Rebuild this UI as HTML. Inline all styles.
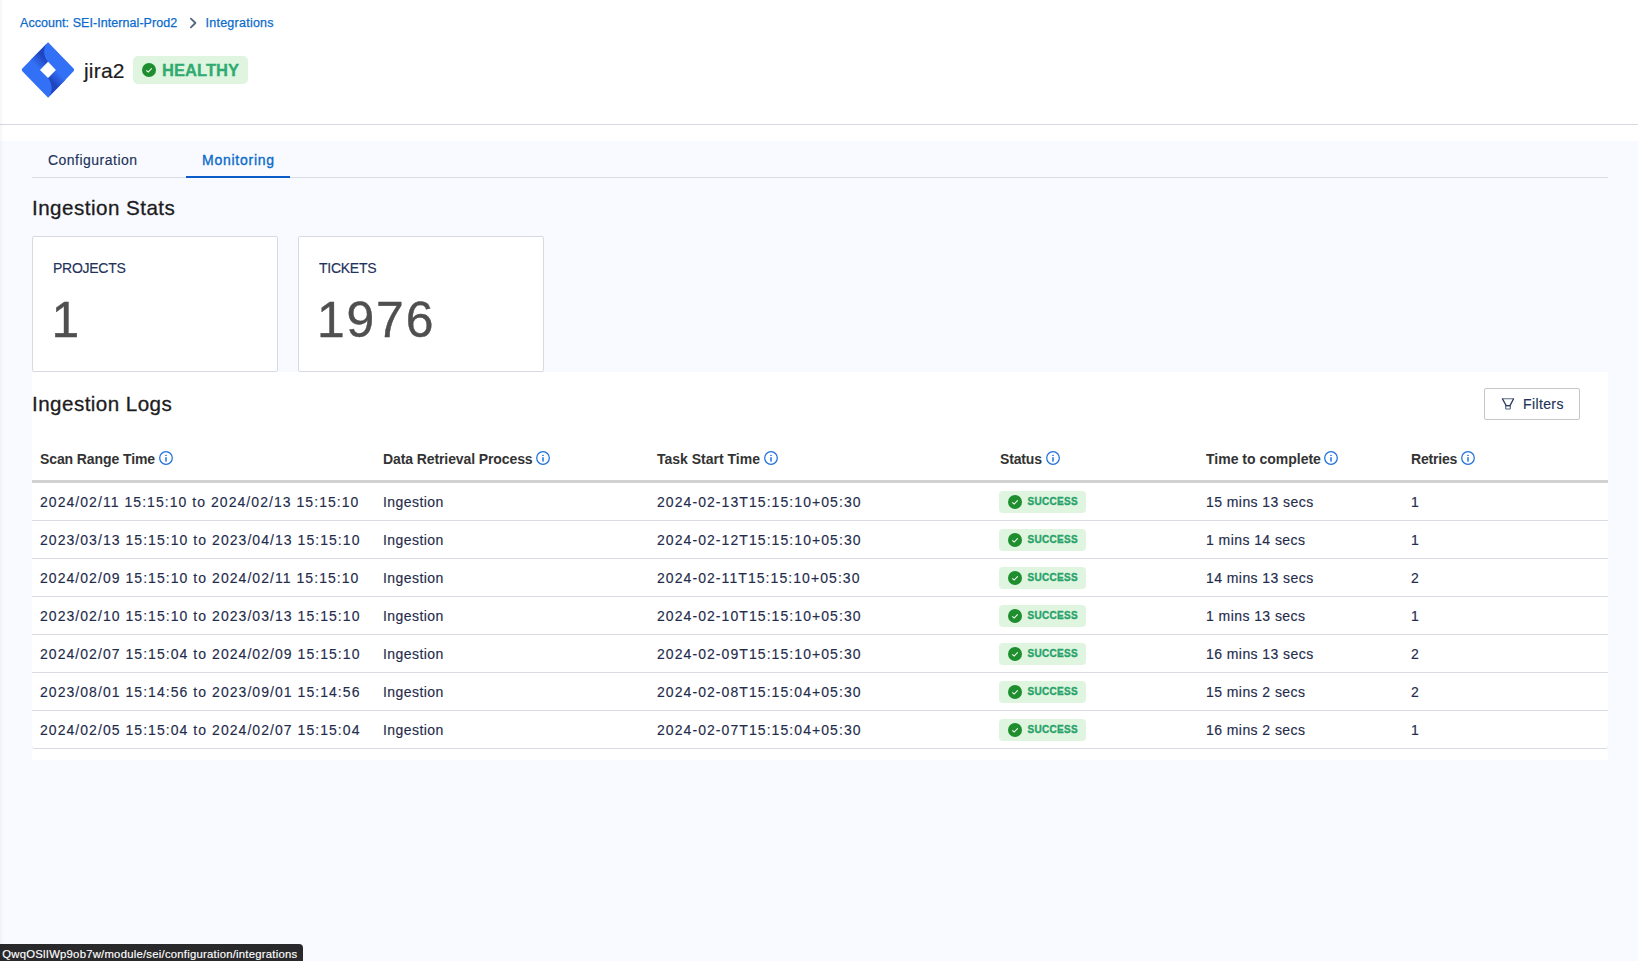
<!DOCTYPE html>
<html><head><meta charset="utf-8"><title>jira2 - Monitoring</title>
<style>
*{box-sizing:border-box;margin:0;padding:0}
html,body{width:1638px;height:961px;overflow:hidden;background:#f9faff;font-family:"Liberation Sans",sans-serif;position:relative}
.t{position:absolute;white-space:nowrap;line-height:1.15}
.r{position:absolute}
.th{font-size:14px;font-weight:bold;color:#333}
</style></head><body>
<div class="r" style="left:0px;top:0px;width:1638px;height:141px;background:#fff;"></div>
<div class="r" style="left:0px;top:0px;width:4px;height:961px;background:linear-gradient(to right,rgba(0,0,40,0.035),rgba(0,0,40,0));z-index:5"></div>
<div class="r" style="left:0px;top:124px;width:1638px;height:1px;background:#d9d9e6;"></div>
<div class="t" style="left:20px;top:16px;font-size:12.5px;color:#0b6bcb;font-weight:normal;letter-spacing:0.06px;-webkit-text-stroke:0.25px #0b6bcb">Account: SEI-Internal-Prod2</div>
<svg class="r" style="left:189px;top:17px" width="9" height="12" viewBox="0 0 9 12"><path d="M1.9 1.7 L6.4 6 L1.9 10.3" fill="none" stroke="#526579" stroke-width="1.8" stroke-linecap="round" stroke-linejoin="round"/></svg>
<div class="t" style="left:205.5px;top:16px;font-size:12.5px;color:#0b6bcb;font-weight:normal;letter-spacing:0.25px;-webkit-text-stroke:0.25px #0b6bcb">Integrations</div>
<svg class="r" style="left:20px;top:40px" width="56" height="60" viewBox="0 0 897 961" preserveAspectRatio="none">
<defs>
<linearGradient id="g1" gradientUnits="userSpaceOnUse" x1="320" y1="480" x2="450" y2="350"><stop offset="0" stop-color="#3271f5"/><stop offset="1" stop-color="#1f45c0"/></linearGradient>
<linearGradient id="g2" gradientUnits="userSpaceOnUse" x1="575" y1="480" x2="445" y2="610"><stop offset="0" stop-color="#3271f5"/><stop offset="1" stop-color="#1f45c0"/></linearGradient>
</defs>
<path d="M450 35 L858 458 Q880 480 858 502 L450 925 L37 502 Q15 480 37 458 Z" fill="#3271f5"/>
<path d="M450 35 L165 325 L320 480 L450 350 C375 270 360 110 450 35 Z" fill="url(#g1)"/>
<path d="M445 925 L730 635 L575 480 L445 610 C520 690 535 850 445 925 Z" fill="url(#g2)"/>
<path d="M450 350 L575 480 L450 610 L320 480 Z" fill="#fff"/>
</svg>
<div class="t" style="left:84px;top:59px;font-size:21px;color:#1c1c1e;font-weight:normal;letter-spacing:0.2px;-webkit-text-stroke:0.2px #1c1c1e">jira2</div>
<div class="r" style="left:133px;top:56px;width:115px;height:28px;background:#dff5e0;border-radius:5px"></div>
<svg class="r" style="left:142px;top:63px" width="14" height="14" viewBox="0 0 14 14"><circle cx="7" cy="7" r="7" fill="#1e8e2e"/><path d="M4.3 7.3 L6.2 9.1 L9.7 5.3" fill="none" stroke="#fff" stroke-width="1.05"/></svg>
<div class="t" style="left:162px;top:61px;font-size:16.5px;color:#2fab72;font-weight:bold;letter-spacing:0.05px;-webkit-text-stroke:0.3px #2fab72">HEALTHY</div>
<div class="t" style="left:48px;top:152px;font-size:14px;color:#22325a;font-weight:normal;letter-spacing:0.48px;-webkit-text-stroke:0.15px #22325a">Configuration</div>
<div class="t" style="left:202px;top:152px;font-size:14px;color:#0b6bcb;font-weight:normal;letter-spacing:0.75px;-webkit-text-stroke:0.35px #0b6bcb">Monitoring</div>
<div class="r" style="left:32px;top:177px;width:1576px;height:1px;background:#d9dce3;"></div>
<div class="r" style="left:186px;top:176px;width:104px;height:2px;background:#0a5cca;"></div>
<div class="t" style="left:32px;top:196.2px;font-size:20.6px;color:#1c1c1e;font-weight:normal;letter-spacing:0.47px;-webkit-text-stroke:0.3px #1c1c1e">Ingestion Stats</div>
<div class="r" style="left:32px;top:236px;width:246px;height:136px;background:#fff;border:1px solid #d8dae2;border-radius:2px"></div>
<div class="r" style="left:298px;top:236px;width:246px;height:136px;background:#fff;border:1px solid #d8dae2;border-radius:2px"></div>
<div class="t" style="left:53px;top:259.5px;font-size:14px;color:#22325a;font-weight:normal;letter-spacing:-0.27px;-webkit-text-stroke:0.15px #22325a">PROJECTS</div>
<div class="t" style="left:51.5px;top:291.5px;font-size:49.8px;color:#4f4f4f;font-weight:normal;letter-spacing:0px;-webkit-text-stroke:0.4px #4f4f4f">1</div>
<div class="t" style="left:319px;top:259.5px;font-size:14px;color:#22325a;font-weight:normal;letter-spacing:-0.27px;-webkit-text-stroke:0.15px #22325a">TICKETS</div>
<div class="t" style="left:317px;top:291.5px;font-size:49.8px;color:#4f4f4f;font-weight:normal;letter-spacing:1.85px;-webkit-text-stroke:0.4px #4f4f4f">1976</div>
<div class="r" style="left:32px;top:372px;width:1576px;height:388px;background:#fff;"></div>
<div class="t" style="left:32px;top:392.2px;font-size:20.6px;color:#1c1c1e;font-weight:normal;letter-spacing:0.45px;-webkit-text-stroke:0.3px #1c1c1e">Ingestion Logs</div>
<div class="r" style="left:1484px;top:388px;width:96px;height:32px;background:#fff;border:1px solid #c9c6cb;border-radius:2px"></div>
<svg class="r" style="left:1496px;top:392px" width="24" height="24" viewBox="0 0 24 24"><g fill="none" stroke="#2b3a5f" stroke-linecap="round" stroke-linejoin="round"><path d="M6.3 6.8 H17.6" stroke-width="1.1" stroke-opacity="0.75"/><path d="M6.6 7.1 L10.2 13.6 H14 L17.4 7.1" stroke-width="1.25"/><rect x="9.7" y="13.6" width="4.6" height="3.4" rx="0.5" stroke-width="1.1" stroke-opacity="0.8"/></g></svg>
<div class="t" style="left:1523px;top:396px;font-size:14px;color:#22325a;font-weight:normal;letter-spacing:0.38px;-webkit-text-stroke:0.15px #22325a">Filters</div>
<div class="t th" style="left:40px;top:451px;letter-spacing:-0.1px">Scan Range Time</div>
<svg class="r" style="left:159px;top:451px" width="14" height="14" viewBox="0 0 14 14"><circle cx="7" cy="7" r="6.3" fill="none" stroke="#1f70dc" stroke-width="1.25"/><rect x="6.15" y="6.2" width="1.7" height="4.4" fill="#3a86e6"/><rect x="6.15" y="3.8" width="1.7" height="1.3" rx="0.4" fill="#2f7ae0"/></svg>
<div class="t th" style="left:383px;top:451px;letter-spacing:-0.1px">Data Retrieval Process</div>
<svg class="r" style="left:536px;top:451px" width="14" height="14" viewBox="0 0 14 14"><circle cx="7" cy="7" r="6.3" fill="none" stroke="#1f70dc" stroke-width="1.25"/><rect x="6.15" y="6.2" width="1.7" height="4.4" fill="#3a86e6"/><rect x="6.15" y="3.8" width="1.7" height="1.3" rx="0.4" fill="#2f7ae0"/></svg>
<div class="t th" style="left:657px;top:451px;letter-spacing:0px">Task Start Time</div>
<svg class="r" style="left:764px;top:451px" width="14" height="14" viewBox="0 0 14 14"><circle cx="7" cy="7" r="6.3" fill="none" stroke="#1f70dc" stroke-width="1.25"/><rect x="6.15" y="6.2" width="1.7" height="4.4" fill="#3a86e6"/><rect x="6.15" y="3.8" width="1.7" height="1.3" rx="0.4" fill="#2f7ae0"/></svg>
<div class="t th" style="left:1000px;top:451px;letter-spacing:-0.15px">Status</div>
<svg class="r" style="left:1046px;top:451px" width="14" height="14" viewBox="0 0 14 14"><circle cx="7" cy="7" r="6.3" fill="none" stroke="#1f70dc" stroke-width="1.25"/><rect x="6.15" y="6.2" width="1.7" height="4.4" fill="#3a86e6"/><rect x="6.15" y="3.8" width="1.7" height="1.3" rx="0.4" fill="#2f7ae0"/></svg>
<div class="t th" style="left:1206px;top:451px;letter-spacing:0px">Time to complete</div>
<svg class="r" style="left:1324px;top:451px" width="14" height="14" viewBox="0 0 14 14"><circle cx="7" cy="7" r="6.3" fill="none" stroke="#1f70dc" stroke-width="1.25"/><rect x="6.15" y="6.2" width="1.7" height="4.4" fill="#3a86e6"/><rect x="6.15" y="3.8" width="1.7" height="1.3" rx="0.4" fill="#2f7ae0"/></svg>
<div class="t th" style="left:1411px;top:451px;letter-spacing:-0.2px">Retries</div>
<svg class="r" style="left:1461px;top:451px" width="14" height="14" viewBox="0 0 14 14"><circle cx="7" cy="7" r="6.3" fill="none" stroke="#1f70dc" stroke-width="1.25"/><rect x="6.15" y="6.2" width="1.7" height="4.4" fill="#3a86e6"/><rect x="6.15" y="3.8" width="1.7" height="1.3" rx="0.4" fill="#2f7ae0"/></svg>
<div class="r" style="left:32px;top:480px;width:1576px;height:3px;background:#d2d2d2;"></div>
<div class="t" style="left:40px;top:494px;font-size:14px;color:#1f2c4c;font-weight:normal;letter-spacing:1.05px;-webkit-text-stroke:0.15px #1f2c4c">2024/02/11 15:15:10 to 2024/02/13 15:15:10</div>
<div class="t" style="left:383px;top:494px;font-size:14px;color:#1f2c4c;font-weight:normal;letter-spacing:0.44px;-webkit-text-stroke:0.15px #1f2c4c">Ingestion</div>
<div class="t" style="left:657px;top:494px;font-size:14px;color:#1f2c4c;font-weight:normal;letter-spacing:1.07px;-webkit-text-stroke:0.15px #1f2c4c">2024-02-13T15:15:10+05:30</div>
<div class="r" style="left:999px;top:491px;width:87px;height:22px;background:#dff5e0;border-radius:4px"></div>
<svg class="r" style="left:1008px;top:495px" width="14" height="14" viewBox="0 0 14 14"><circle cx="7" cy="7" r="7" fill="#1e8e2e"/><path d="M4.3 7.3 L6.2 9.1 L9.7 5.3" fill="none" stroke="#fff" stroke-width="1.05"/></svg>
<div class="t" style="left:1027.5px;top:496px;font-size:10px;color:#2aa36a;font-weight:bold;letter-spacing:0.32px;-webkit-text-stroke:0.35px #2aa36a">SUCCESS</div>
<div class="t" style="left:1206px;top:494px;font-size:14px;color:#1f2c4c;font-weight:normal;letter-spacing:0.43px;-webkit-text-stroke:0.15px #1f2c4c">15 mins 13 secs</div>
<div class="t" style="left:1411px;top:494px;font-size:14px;color:#1f2c4c;font-weight:normal;letter-spacing:0px;-webkit-text-stroke:0.15px #1f2c4c">1</div>
<div class="r" style="left:32px;top:520px;width:1576px;height:1px;background:#d9dbe4;"></div>
<div class="t" style="left:40px;top:532px;font-size:14px;color:#1f2c4c;font-weight:normal;letter-spacing:1.05px;-webkit-text-stroke:0.15px #1f2c4c">2023/03/13 15:15:10 to 2023/04/13 15:15:10</div>
<div class="t" style="left:383px;top:532px;font-size:14px;color:#1f2c4c;font-weight:normal;letter-spacing:0.44px;-webkit-text-stroke:0.15px #1f2c4c">Ingestion</div>
<div class="t" style="left:657px;top:532px;font-size:14px;color:#1f2c4c;font-weight:normal;letter-spacing:1.07px;-webkit-text-stroke:0.15px #1f2c4c">2024-02-12T15:15:10+05:30</div>
<div class="r" style="left:999px;top:529px;width:87px;height:22px;background:#dff5e0;border-radius:4px"></div>
<svg class="r" style="left:1008px;top:533px" width="14" height="14" viewBox="0 0 14 14"><circle cx="7" cy="7" r="7" fill="#1e8e2e"/><path d="M4.3 7.3 L6.2 9.1 L9.7 5.3" fill="none" stroke="#fff" stroke-width="1.05"/></svg>
<div class="t" style="left:1027.5px;top:534px;font-size:10px;color:#2aa36a;font-weight:bold;letter-spacing:0.32px;-webkit-text-stroke:0.35px #2aa36a">SUCCESS</div>
<div class="t" style="left:1206px;top:532px;font-size:14px;color:#1f2c4c;font-weight:normal;letter-spacing:0.43px;-webkit-text-stroke:0.15px #1f2c4c">1 mins 14 secs</div>
<div class="t" style="left:1411px;top:532px;font-size:14px;color:#1f2c4c;font-weight:normal;letter-spacing:0px;-webkit-text-stroke:0.15px #1f2c4c">1</div>
<div class="r" style="left:32px;top:558px;width:1576px;height:1px;background:#d9dbe4;"></div>
<div class="t" style="left:40px;top:570px;font-size:14px;color:#1f2c4c;font-weight:normal;letter-spacing:1.05px;-webkit-text-stroke:0.15px #1f2c4c">2024/02/09 15:15:10 to 2024/02/11 15:15:10</div>
<div class="t" style="left:383px;top:570px;font-size:14px;color:#1f2c4c;font-weight:normal;letter-spacing:0.44px;-webkit-text-stroke:0.15px #1f2c4c">Ingestion</div>
<div class="t" style="left:657px;top:570px;font-size:14px;color:#1f2c4c;font-weight:normal;letter-spacing:1.07px;-webkit-text-stroke:0.15px #1f2c4c">2024-02-11T15:15:10+05:30</div>
<div class="r" style="left:999px;top:567px;width:87px;height:22px;background:#dff5e0;border-radius:4px"></div>
<svg class="r" style="left:1008px;top:571px" width="14" height="14" viewBox="0 0 14 14"><circle cx="7" cy="7" r="7" fill="#1e8e2e"/><path d="M4.3 7.3 L6.2 9.1 L9.7 5.3" fill="none" stroke="#fff" stroke-width="1.05"/></svg>
<div class="t" style="left:1027.5px;top:572px;font-size:10px;color:#2aa36a;font-weight:bold;letter-spacing:0.32px;-webkit-text-stroke:0.35px #2aa36a">SUCCESS</div>
<div class="t" style="left:1206px;top:570px;font-size:14px;color:#1f2c4c;font-weight:normal;letter-spacing:0.43px;-webkit-text-stroke:0.15px #1f2c4c">14 mins 13 secs</div>
<div class="t" style="left:1411px;top:570px;font-size:14px;color:#1f2c4c;font-weight:normal;letter-spacing:0px;-webkit-text-stroke:0.15px #1f2c4c">2</div>
<div class="r" style="left:32px;top:596px;width:1576px;height:1px;background:#d9dbe4;"></div>
<div class="t" style="left:40px;top:608px;font-size:14px;color:#1f2c4c;font-weight:normal;letter-spacing:1.05px;-webkit-text-stroke:0.15px #1f2c4c">2023/02/10 15:15:10 to 2023/03/13 15:15:10</div>
<div class="t" style="left:383px;top:608px;font-size:14px;color:#1f2c4c;font-weight:normal;letter-spacing:0.44px;-webkit-text-stroke:0.15px #1f2c4c">Ingestion</div>
<div class="t" style="left:657px;top:608px;font-size:14px;color:#1f2c4c;font-weight:normal;letter-spacing:1.07px;-webkit-text-stroke:0.15px #1f2c4c">2024-02-10T15:15:10+05:30</div>
<div class="r" style="left:999px;top:605px;width:87px;height:22px;background:#dff5e0;border-radius:4px"></div>
<svg class="r" style="left:1008px;top:609px" width="14" height="14" viewBox="0 0 14 14"><circle cx="7" cy="7" r="7" fill="#1e8e2e"/><path d="M4.3 7.3 L6.2 9.1 L9.7 5.3" fill="none" stroke="#fff" stroke-width="1.05"/></svg>
<div class="t" style="left:1027.5px;top:610px;font-size:10px;color:#2aa36a;font-weight:bold;letter-spacing:0.32px;-webkit-text-stroke:0.35px #2aa36a">SUCCESS</div>
<div class="t" style="left:1206px;top:608px;font-size:14px;color:#1f2c4c;font-weight:normal;letter-spacing:0.43px;-webkit-text-stroke:0.15px #1f2c4c">1 mins 13 secs</div>
<div class="t" style="left:1411px;top:608px;font-size:14px;color:#1f2c4c;font-weight:normal;letter-spacing:0px;-webkit-text-stroke:0.15px #1f2c4c">1</div>
<div class="r" style="left:32px;top:634px;width:1576px;height:1px;background:#d9dbe4;"></div>
<div class="t" style="left:40px;top:646px;font-size:14px;color:#1f2c4c;font-weight:normal;letter-spacing:1.05px;-webkit-text-stroke:0.15px #1f2c4c">2024/02/07 15:15:04 to 2024/02/09 15:15:10</div>
<div class="t" style="left:383px;top:646px;font-size:14px;color:#1f2c4c;font-weight:normal;letter-spacing:0.44px;-webkit-text-stroke:0.15px #1f2c4c">Ingestion</div>
<div class="t" style="left:657px;top:646px;font-size:14px;color:#1f2c4c;font-weight:normal;letter-spacing:1.07px;-webkit-text-stroke:0.15px #1f2c4c">2024-02-09T15:15:10+05:30</div>
<div class="r" style="left:999px;top:643px;width:87px;height:22px;background:#dff5e0;border-radius:4px"></div>
<svg class="r" style="left:1008px;top:647px" width="14" height="14" viewBox="0 0 14 14"><circle cx="7" cy="7" r="7" fill="#1e8e2e"/><path d="M4.3 7.3 L6.2 9.1 L9.7 5.3" fill="none" stroke="#fff" stroke-width="1.05"/></svg>
<div class="t" style="left:1027.5px;top:648px;font-size:10px;color:#2aa36a;font-weight:bold;letter-spacing:0.32px;-webkit-text-stroke:0.35px #2aa36a">SUCCESS</div>
<div class="t" style="left:1206px;top:646px;font-size:14px;color:#1f2c4c;font-weight:normal;letter-spacing:0.43px;-webkit-text-stroke:0.15px #1f2c4c">16 mins 13 secs</div>
<div class="t" style="left:1411px;top:646px;font-size:14px;color:#1f2c4c;font-weight:normal;letter-spacing:0px;-webkit-text-stroke:0.15px #1f2c4c">2</div>
<div class="r" style="left:32px;top:672px;width:1576px;height:1px;background:#d9dbe4;"></div>
<div class="t" style="left:40px;top:684px;font-size:14px;color:#1f2c4c;font-weight:normal;letter-spacing:1.05px;-webkit-text-stroke:0.15px #1f2c4c">2023/08/01 15:14:56 to 2023/09/01 15:14:56</div>
<div class="t" style="left:383px;top:684px;font-size:14px;color:#1f2c4c;font-weight:normal;letter-spacing:0.44px;-webkit-text-stroke:0.15px #1f2c4c">Ingestion</div>
<div class="t" style="left:657px;top:684px;font-size:14px;color:#1f2c4c;font-weight:normal;letter-spacing:1.07px;-webkit-text-stroke:0.15px #1f2c4c">2024-02-08T15:15:04+05:30</div>
<div class="r" style="left:999px;top:681px;width:87px;height:22px;background:#dff5e0;border-radius:4px"></div>
<svg class="r" style="left:1008px;top:685px" width="14" height="14" viewBox="0 0 14 14"><circle cx="7" cy="7" r="7" fill="#1e8e2e"/><path d="M4.3 7.3 L6.2 9.1 L9.7 5.3" fill="none" stroke="#fff" stroke-width="1.05"/></svg>
<div class="t" style="left:1027.5px;top:686px;font-size:10px;color:#2aa36a;font-weight:bold;letter-spacing:0.32px;-webkit-text-stroke:0.35px #2aa36a">SUCCESS</div>
<div class="t" style="left:1206px;top:684px;font-size:14px;color:#1f2c4c;font-weight:normal;letter-spacing:0.43px;-webkit-text-stroke:0.15px #1f2c4c">15 mins 2 secs</div>
<div class="t" style="left:1411px;top:684px;font-size:14px;color:#1f2c4c;font-weight:normal;letter-spacing:0px;-webkit-text-stroke:0.15px #1f2c4c">2</div>
<div class="r" style="left:32px;top:710px;width:1576px;height:1px;background:#d9dbe4;"></div>
<div class="t" style="left:40px;top:722px;font-size:14px;color:#1f2c4c;font-weight:normal;letter-spacing:1.05px;-webkit-text-stroke:0.15px #1f2c4c">2024/02/05 15:15:04 to 2024/02/07 15:15:04</div>
<div class="t" style="left:383px;top:722px;font-size:14px;color:#1f2c4c;font-weight:normal;letter-spacing:0.44px;-webkit-text-stroke:0.15px #1f2c4c">Ingestion</div>
<div class="t" style="left:657px;top:722px;font-size:14px;color:#1f2c4c;font-weight:normal;letter-spacing:1.07px;-webkit-text-stroke:0.15px #1f2c4c">2024-02-07T15:15:04+05:30</div>
<div class="r" style="left:999px;top:719px;width:87px;height:22px;background:#dff5e0;border-radius:4px"></div>
<svg class="r" style="left:1008px;top:723px" width="14" height="14" viewBox="0 0 14 14"><circle cx="7" cy="7" r="7" fill="#1e8e2e"/><path d="M4.3 7.3 L6.2 9.1 L9.7 5.3" fill="none" stroke="#fff" stroke-width="1.05"/></svg>
<div class="t" style="left:1027.5px;top:724px;font-size:10px;color:#2aa36a;font-weight:bold;letter-spacing:0.32px;-webkit-text-stroke:0.35px #2aa36a">SUCCESS</div>
<div class="t" style="left:1206px;top:722px;font-size:14px;color:#1f2c4c;font-weight:normal;letter-spacing:0.43px;-webkit-text-stroke:0.15px #1f2c4c">16 mins 2 secs</div>
<div class="t" style="left:1411px;top:722px;font-size:14px;color:#1f2c4c;font-weight:normal;letter-spacing:0px;-webkit-text-stroke:0.15px #1f2c4c">1</div>
<div class="r" style="left:32px;top:706px;width:1576px;height:43px;background:transparent;border-bottom:1px solid #d9dbe4;border-radius:0 0 3px 3px"></div>
<div class="r" style="left:0px;top:944px;width:303px;height:17px;background:#29292b;border-radius:0 4px 0 0"></div>
<div class="t" style="left:2.3px;top:947.5px;font-size:11.3px;color:#fff;font-weight:normal;letter-spacing:0.24px;-webkit-text-stroke:0.15px #fff">QwqOSlIWp9ob7w/module/sei/configuration/integrations</div>
</body></html>
